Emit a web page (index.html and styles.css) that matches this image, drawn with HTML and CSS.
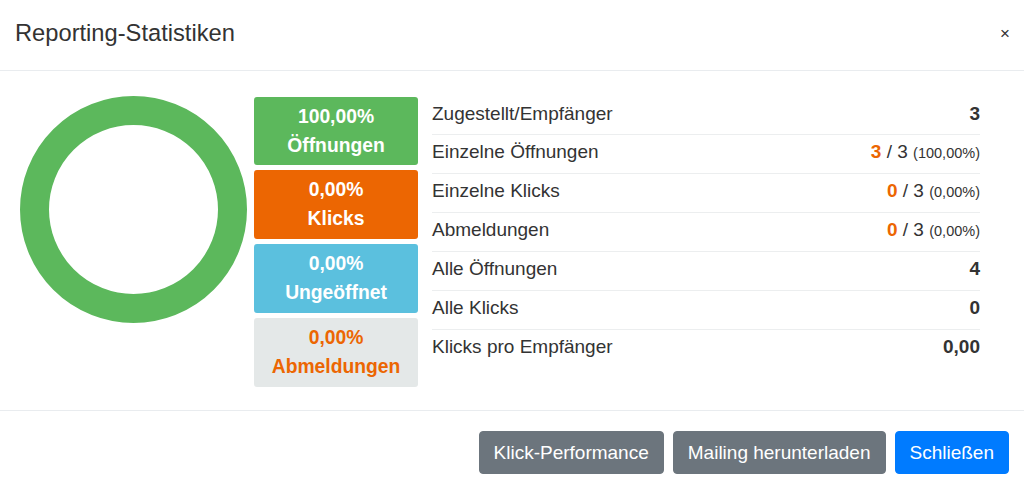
FILE: index.html
```html
<!DOCTYPE html>
<html lang="de">
<head>
<meta charset="utf-8">
<title>Reporting-Statistiken</title>
<link rel="stylesheet" href="styles.css">
</head>
<body>
<div class="modal">
  <div class="modal-header">
    <h5 class="modal-title">Reporting-Statistiken</h5>
    <span class="close">×</span>
  </div>
  <div class="modal-body">
    <div class="donut">
      <svg width="227" height="227" viewBox="0 0 227 227">
        <circle cx="113.5" cy="113.5" r="99" fill="none" stroke="#5cb85c" stroke-width="29"/>
      </svg>
    </div>
    <div class="tiles">
      <div class="tile tile-green"><div>100,00%</div><div>Öffnungen</div></div>
      <div class="tile tile-orange"><div>0,00%</div><div>Klicks</div></div>
      <div class="tile tile-cyan"><div>0,00%</div><div>Ungeöffnet</div></div>
      <div class="tile tile-gray"><div>0,00%</div><div>Abmeldungen</div></div>
    </div>
    <div class="stats">
      <div class="row"><span class="label">Zugestellt/Empfänger</span><span class="value"><b>3</b></span></div>
      <div class="row"><span class="label">Einzelne Öffnungen</span><span class="value"><b class="hl">3</b> / 3 <small>(100,00%)</small></span></div>
      <div class="row"><span class="label">Einzelne Klicks</span><span class="value"><b class="hl">0</b> / 3 <small>(0,00%)</small></span></div>
      <div class="row"><span class="label">Abmeldungen</span><span class="value"><b class="hl">0</b> / 3 <small>(0,00%)</small></span></div>
      <div class="row"><span class="label">Alle Öffnungen</span><span class="value"><b>4</b></span></div>
      <div class="row"><span class="label">Alle Klicks</span><span class="value"><b>0</b></span></div>
      <div class="row"><span class="label">Klicks pro Empfänger</span><span class="value"><b>0,00</b></span></div>
    </div>
  </div>
  <div class="modal-footer">
    <button class="btn btn-secondary">Klick-Performance</button>
    <button class="btn btn-secondary">Mailing herunterladen</button>
    <button class="btn btn-primary">Schließen</button>
  </div>
</div>
</body>
</html>
```
FILE: styles.css
```css
* { box-sizing: border-box; }
html, body { margin: 0; padding: 0; background: #fff; }
body {
  font-family: "Liberation Sans", Arial, sans-serif;
  color: #333;
  font-size: 19px;
  width: 1024px;
  height: 489px;
  overflow: hidden;
}
.modal { display: flex; flex-direction: column; }
.modal-header {
  height: 71px;
  display: flex;
  align-items: center;
  justify-content: space-between;
  padding: 0 15px 3px 15px;
  border-bottom: 1px solid #e9ecef;
}
.modal-title {
  margin: 0;
  font-size: 23.7px;
  font-weight: normal;
  color: #333;
}
.close {
  font-size: 17px;
  color: #333;
  margin-right: -1px;
}
.modal-body {
  height: 339px;
  display: flex;
  align-items: flex-start;
  padding: 25px 44px 0 20px;
}
.donut { width: 227px; height: 227px; flex: none; }
.donut svg { display: block; }
.tiles {
  flex: none;
  width: 164px;
  margin-left: 7px;
  margin-top: 1px;
  display: flex;
  flex-direction: column;
  gap: 5px;
}
.tile {
  height: 69px;
  border-radius: 3px;
  color: #fff;
  font-weight: bold;
  font-size: 19.3px;
  line-height: 29px;
  text-align: center;
  padding-top: 5px;
}
.tile-green { background: #5cb85c; height: 68px; }
.tile-orange { background: #ec6602; }
.tile-cyan { background: #5bc0de; }
.tile-gray { background: #e4e8e8; color: #ec6602; }
.stats {
  flex: 1;
  margin-left: 14px;
  display: flex;
  flex-direction: column;
}
.row {
  height: 39px;
  display: flex;
  align-items: center;
  justify-content: space-between;
  border-top: 1px solid #eceeef;
  padding-bottom: 4px;
}
.row:first-child { border-top: none; height: 38px; padding-bottom: 2px; }
.value b { font-weight: bold; }
.value .hl { color: #ec6602; }
.value small { font-size: 14.5px; }
.modal-footer {
  border-top: 1px solid #e9ecef;
  height: 79px;
  display: flex;
  align-items: center;
  justify-content: flex-end;
  gap: 9px;
  padding: 5px 15px 0 0;
}
.btn {
  font-family: "Liberation Sans", Arial, sans-serif;
  font-size: 19px;
  height: 43px;
  padding: 0 14px;
  border-radius: 4px;
  color: #fff;
  border: 1px solid transparent;
}
.btn-secondary { background: #6c757d; border-color: #6c757d; }
.btn-primary { background: #007bff; border-color: #007bff; }
```
